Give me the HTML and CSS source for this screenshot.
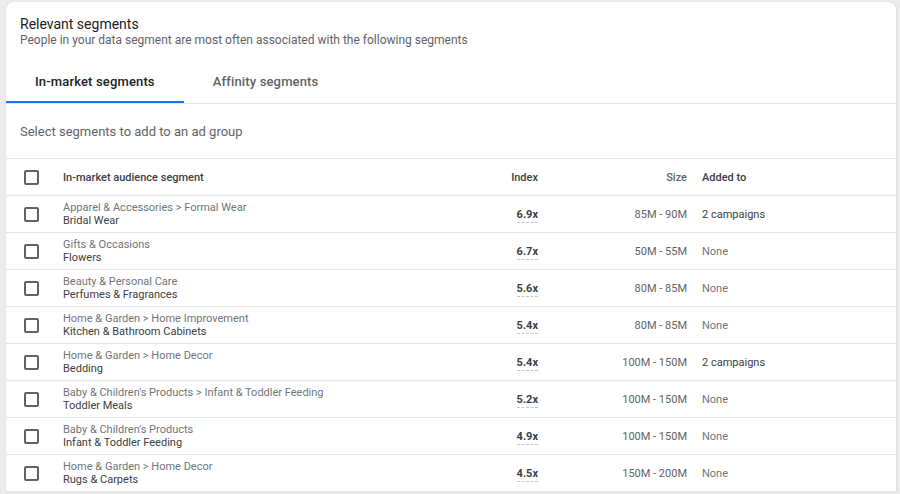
FILE: index.html
```html
<!DOCTYPE html>
<html>
<head>
<meta charset="utf-8">
<link rel="stylesheet" href="styles.css">
</head>
<body>
<div class="card">
  <div class="head">
    <div class="title">Relevant segments</div>
    <div class="subtitle">People in your data segment are most often associated with the following segments</div>
  </div>
  <div class="tabs">
    <div class="tab active">In-market segments</div>
    <div class="tab">Affinity segments</div>
  </div>
  <div class="hint">Select segments to add to an ad group</div>
  <div class="table">
    <div class="row header">
      <div class="cb-cell"><span class="cb"></span></div>
      <div class="seg">In-market audience segment</div>
      <div class="idx">Index</div>
      <div class="size">Size</div>
      <div class="added">Added to</div>
    </div>
    <div class="row">
      <div class="cb-cell"><span class="cb"></span></div>
      <div class="seg"><div class="path">Apparel &amp; Accessories &gt; Formal Wear</div><div class="name">Bridal Wear</div></div>
      <div class="idx"><span class="val">6.9x</span></div>
      <div class="size">85M - 90M</div>
      <div class="added dark">2 campaigns</div>
    </div>
    <div class="row">
      <div class="cb-cell"><span class="cb"></span></div>
      <div class="seg"><div class="path">Gifts &amp; Occasions</div><div class="name">Flowers</div></div>
      <div class="idx"><span class="val">6.7x</span></div>
      <div class="size">50M - 55M</div>
      <div class="added">None</div>
    </div>
    <div class="row">
      <div class="cb-cell"><span class="cb"></span></div>
      <div class="seg"><div class="path">Beauty &amp; Personal Care</div><div class="name">Perfumes &amp; Fragrances</div></div>
      <div class="idx"><span class="val">5.6x</span></div>
      <div class="size">80M - 85M</div>
      <div class="added">None</div>
    </div>
    <div class="row">
      <div class="cb-cell"><span class="cb"></span></div>
      <div class="seg"><div class="path">Home &amp; Garden &gt; Home Improvement</div><div class="name">Kitchen &amp; Bathroom Cabinets</div></div>
      <div class="idx"><span class="val">5.4x</span></div>
      <div class="size">80M - 85M</div>
      <div class="added">None</div>
    </div>
    <div class="row">
      <div class="cb-cell"><span class="cb"></span></div>
      <div class="seg"><div class="path">Home &amp; Garden &gt; Home Decor</div><div class="name">Bedding</div></div>
      <div class="idx"><span class="val">5.4x</span></div>
      <div class="size">100M - 150M</div>
      <div class="added dark">2 campaigns</div>
    </div>
    <div class="row">
      <div class="cb-cell"><span class="cb"></span></div>
      <div class="seg"><div class="path">Baby &amp; Children's Products &gt; Infant &amp; Toddler Feeding</div><div class="name">Toddler Meals</div></div>
      <div class="idx"><span class="val">5.2x</span></div>
      <div class="size">100M - 150M</div>
      <div class="added">None</div>
    </div>
    <div class="row">
      <div class="cb-cell"><span class="cb"></span></div>
      <div class="seg"><div class="path">Baby &amp; Children's Products</div><div class="name">Infant &amp; Toddler Feeding</div></div>
      <div class="idx"><span class="val">4.9x</span></div>
      <div class="size">100M - 150M</div>
      <div class="added">None</div>
    </div>
    <div class="row">
      <div class="cb-cell"><span class="cb"></span></div>
      <div class="seg"><div class="path">Home &amp; Garden &gt; Home Decor</div><div class="name">Rugs &amp; Carpets</div></div>
      <div class="idx"><span class="val">4.5x</span></div>
      <div class="size">150M - 200M</div>
      <div class="added">None</div>
    </div>
  </div>
</div>
</body>
</html>
```
FILE: styles.css
```css
html, body {
  margin: 0;
  padding: 0;
  background: #ececec;
  overflow: hidden;
  height: 494px;
}
body {
  padding: 2px 3px 0 6px;
  font-family: Roboto, "Liberation Sans", Arial, sans-serif;
  color: #3c4043;
}
.card {
  background: #fff;
  border-radius: 8px 8px 0 0;
  box-shadow: 0 0 1px rgba(0,0,0,0.18);
  border-right: 1px solid #e2e2e2;
}
.head {
  padding: 13px 14px 0 14px;
}
.title {
  font-size: 14px;
  line-height: 18px;
  color: #202124;
}
.subtitle {
  font-size: 12px;
  line-height: 14px;
  color: #5f6368;
}
.tabs {
  display: flex;
  margin-top: 12px;
  border-bottom: 1px solid #e6e6e6;
}
.tab {
  height: 38px;
  padding: 4px 29px 0 29px;
  font-size: 13px;
  font-weight: 500;
  line-height: 38px;
  color: #5f6368;
  border-bottom: 2px solid transparent;
  letter-spacing: 0.15px;
}
.tab.active {
  color: #202124;
  border-bottom-color: #1a73e8;
}
.hint {
  height: 54px;
  line-height: 56px;
  padding-left: 14px;
  font-size: 13px;
  color: #5f6368;
  border-bottom: 1px solid #e6e6e6;
}
.row {
  display: grid;
  grid-template-columns: 57px 1fr 60px 149px 209px;
  align-items: center;
  height: 36px;
  border-bottom: 1px solid #e6e6e6;
  font-size: 11px;
}
.cb-cell {
  padding-left: 18px;
  display: flex;
  align-items: center;
}
.cb {
  width: 11px;
  height: 11px;
  border: 2px solid #5f6368;
  border-radius: 2px;
}
.header {
  font-weight: 500;
  color: #3c4043;
}
.path {
  color: #70757a;
  line-height: 13px;
}
.name {
  color: #3c4043;
  line-height: 13px;
}
.idx {
  text-align: right;
}
.val {
  font-weight: 700;
  color: #3c4043;
  border-bottom: 1px dashed #c4c7c9;
  padding-bottom: 1px;
}
.size {
  text-align: right;
  color: #5f6368;
}
.added {
  padding-left: 15px;
  color: #70757a;
}
.header .added {
  color: #3c4043;
}
.added.dark {
  color: #3c4043;
}
```
